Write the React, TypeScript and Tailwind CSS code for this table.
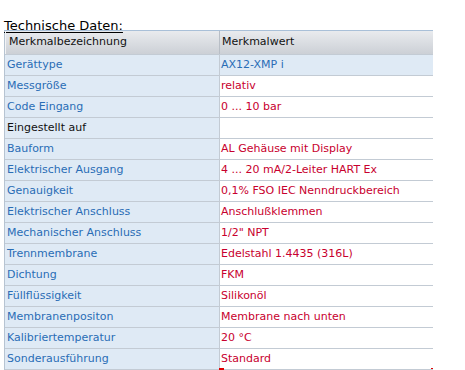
const rows: { label: string; value: string; tone: "blue" | "red" | "black"; hi?: boolean }[] = [
  { label: "Gerättype", value: "AX12-XMP i", tone: "blue", hi: true },
  { label: "Messgröße", value: "relativ", tone: "red" },
  { label: "Code Eingang", value: "0 ... 10 bar", tone: "red" },
  { label: "Eingestellt auf", value: "", tone: "black" },
  { label: "Bauform", value: "AL Gehäuse mit Display", tone: "red" },
  { label: "Elektrischer Ausgang", value: "4 ... 20 mA/2-Leiter HART Ex", tone: "red" },
  { label: "Genauigkeit", value: "0,1% FSO IEC Nenndruckbereich", tone: "red" },
  { label: "Elektrischer Anschluss", value: "Anschlußklemmen", tone: "red" },
  { label: "Mechanischer Anschluss", value: "1/2\" NPT", tone: "red" },
  { label: "Trennmembrane", value: "Edelstahl 1.4435 (316L)", tone: "red" },
  { label: "Dichtung", value: "FKM", tone: "red" },
  { label: "Füllflüssigkeit", value: "Silikonöl", tone: "red" },
  { label: "Membranenpositon", value: "Membrane nach unten", tone: "red" },
  { label: "Kalibriertemperatur", value: "20 °C", tone: "red" },
  { label: "Sonderausführung", value: "Standard", tone: "red" },
];

function Row({ label, value, tone, hi }: (typeof rows)[number]) {
  const isBlack = tone === "black";
  return (
    <div className="flex h-[21px] border-b border-[#c3cbd4]">
      <div
        className={
          "w-[215px] flex items-center pl-[2px] bg-[#dfeaf5] border-r border-[#c3cbd4] " +
          (isBlack ? "text-[#111111]" : "text-[#2a6db5]")
        }
      >
        {label}
      </div>
      <div
        className={
          "flex-1 flex items-center pl-[1px] " +
          (hi ? "bg-[#dfeaf5] " : "bg-white ") +
          (tone === "blue" ? "text-[#2a6db5]" : "text-[#c8002e]")
        }
      >
        {value}
      </div>
    </div>
  );
}

export default function App() {
  return (
    <div className="w-[465px] h-[370px] bg-white overflow-hidden pl-[4px] relative font-['DejaVu_Sans',sans-serif]">
      <div className="h-[30px] pt-[13px]">
        <span className="text-[13px] leading-[16px] text-black underline underline-offset-[2px]">
          Technische Daten:
        </span>
      </div>
      <div className="w-[429px] border-t border-l border-[#a9c0d8] border-l-[#b7c4d2] text-[11px]">
        <div className="flex h-[24px] border-b border-[#c3cbd4] bg-gradient-to-b from-[#e9ebee] to-[#ccd0d6] text-[#111111]">
          <div className="w-[215px] flex items-center pl-[3px] border-r border-[#b8bec6] border-l border-l-[#f2f3f5]">
            Merkmalbezeichnung
          </div>
          <div className="flex-1 flex items-center pl-[2px]">Merkmalwert</div>
        </div>
        {rows.map((r) => (
          <Row key={r.label} {...r} />
        ))}
      </div>
      <div className="absolute left-[219px] top-[368px] w-[5px] h-[2px] bg-[#e00000]" />
      <div className="absolute left-[431px] top-[368px] w-[2px] h-[1px] bg-[#e00000]" />
    </div>
  );
}
